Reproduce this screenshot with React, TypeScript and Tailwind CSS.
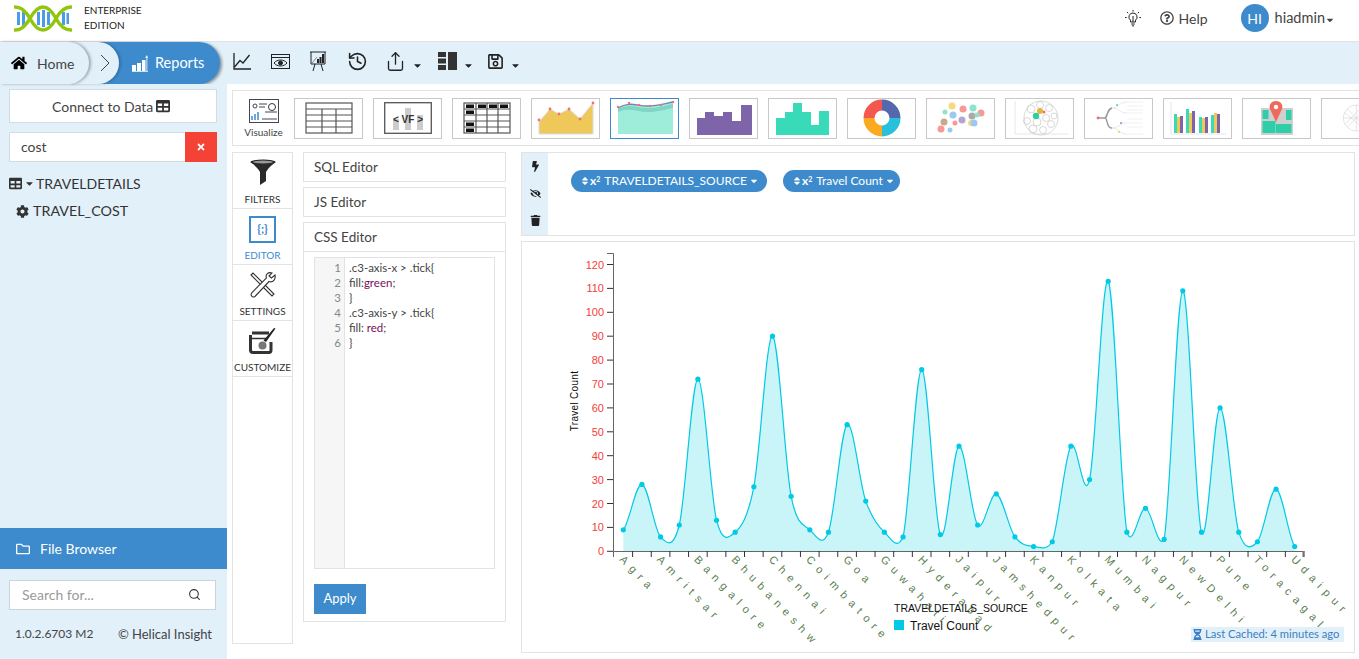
import {
  FaBolt,
  FaCaretDown,
  FaCog,
  FaEyeSlash,
  FaHome,
  FaHourglassHalf,
  FaRegFolder,
  FaRegQuestionCircle,
  FaRegSave,
  FaSort,
  FaTable,
  FaTimes,
  FaTrash,
} from "react-icons/fa";
import { History, Search, Share } from "lucide-react";

const FONT = "font-['Lato','Liberation_Sans',sans-serif]";

const values = [
  9, 28, 6, 11, 72, 13, 8, 27, 90, 23, 9, 8, 53, 21, 8, 6, 76, 7, 44, 11, 24, 6, 2, 4, 44, 30, 113, 8, 18, 5, 109, 8, 60,
  8, 4, 26, 2,
];
const labels = [
  "Agra",
  "Amritsar",
  "Bangalore",
  "Bhubaneshw",
  "Chennai",
  "Coimbatore",
  "Goa",
  "Guwahati",
  "Hyderabad",
  "Jaipur",
  "Jamshedpur",
  "Kanpur",
  "Kolkata",
  "Mumbai",
  "Nagpur",
  "NewDelhi",
  "Pune",
  "Toracagal",
  "Udaipur",
];

const px = (i: number) => 623.3 + i * 18.65;
const py = (v: number) => 551.3 - v * 2.39;

function curvePath() {
  const k = 1 / 6.3;
  let d = `M${px(0)},${py(values[0])}`;
  for (let i = 0; i < values.length - 1; i++) {
    const prev = values[Math.max(i - 1, 0)];
    const cur = values[i];
    const next = values[i + 1];
    const after = values[Math.min(i + 2, values.length - 1)];
    const c1 = Math.min(py(cur + (next - prev) * k), 551.3);
    const c2 = Math.min(py(next - (after - cur) * k), 551.3);
    d += ` C${px(i) + 6.2},${c1} ${px(i + 1) - 6.2},${c2} ${px(i + 1)},${py(next)}`;
  }
  return d;
}

function Chart() {
  const line = curvePath();
  const area = `${line} L${px(36)},551.3 L${px(0)},551.3 Z`;
  const yTicks = Array.from({ length: 13 }, (_, i) => i * 10);
  const xTicks = Array.from({ length: 37 }, (_, i) => 632.6 + i * 18.65);
  return (
    <svg viewBox="522 242 832 410" className="w-[832px] h-[410px]" fontFamily="Liberation Sans, sans-serif">
      <path d={area} fill="#c9f5f9" />
      <path d={line} fill="none" stroke="#00cae6" strokeWidth="1.2" />
      {values.map((v, i) => (
        <circle key={i} cx={px(i)} cy={py(v)} r="2.6" fill="#00cae6" />
      ))}
      <path d="M607,253.5 H613.5 V551.5 H1303 V557" fill="none" stroke="#666" />
      <path d="M613.5,551.5 V557" stroke="#666" />
      {yTicks.map((t) => (
        <g key={t}>
          <line x1="607" x2="613" y1={py(t)} y2={py(t)} stroke="#333" />
          <text x="604" y={py(t) + 4} textAnchor="end" fontSize="11" fill="#f5403a">
            {t}
          </text>
        </g>
      ))}
      {xTicks.map((x) => (
        <line key={x} x1={x} x2={x} y1="551" y2="557" stroke="#333" />
      ))}
      {labels.map((l, i) => {
        const x = 619 + i * 37.3;
        return (
          <text
            key={l}
            transform={`rotate(46 ${x} 560)`}
            x={x}
            y="560"
            fontSize="11"
            letterSpacing="5.8"
            fill="#5b8050"
          >
            {l}
          </text>
        );
      })}
      <text transform="rotate(-90 578 401)" x="578" y="401" textAnchor="middle" fontSize="10" letterSpacing="0.3" fill="#111">
        Travel Count
      </text>
      <text x="894" y="612" fontSize="10.5" fill="#111">
        TRAVELDETAILS_SOURCE
      </text>
      <rect x="894" y="620" width="10" height="10" fill="#00cae6" />
      <text x="910" y="630" fontSize="12" fill="#111">
        Travel Count
      </text>
    </svg>
  );
}

function Logo() {
  return (
    <svg width="58" height="27" viewBox="0 0 58 27" className="shrink-0">
      <g fill="#4a9be8">
        <rect x="3" y="7" width="3" height="13" />
        <rect x="8" y="6" width="3" height="15" />
        <rect x="23" y="7" width="3" height="13" />
        <rect x="28" y="5" width="3" height="17" />
        <rect x="33" y="7" width="3" height="13" />
        <rect x="48" y="7" width="3" height="13" />
        <rect x="52.5" y="8" width="2.5" height="11" />
      </g>
      <path
        d="M1,2 C6,2 10,4 16,13.5 C20,21 24,25 29,25 C34,25 38,21 42,13.5 C46,6 50,2 57,2 M1,25 C6,25 10,23 16,13.5 C20,6 24,2 29,2 C34,2 38,6 42,13.5 C46,21 50,25 57,25"
        fill="none"
        stroke="#92c60e"
        strokeWidth="3.4"
        strokeLinecap="round"
      />
    </svg>
  );
}

function Bulb() {
  return (
    <svg width="18" height="18" viewBox="0 0 18 18" fill="none" stroke="#222" strokeWidth="1">
      <path d="M9,4 a4,4 0 0 1 2.5,7.2 V13 H6.5 V11.2 A4,4 0 0 1 9,4 Z" />
      <path d="M7.2,15 H10.8 M8,16.8 H10 M9,1 V2.6 M3,3 L4.2,4.2 M15,3 L13.8,4.2 M1,8.5 H2.6 M15.4,8.5 H17 M9,7 V13" />
    </svg>
  );
}

function ToolbarIcons() {
  return (
    <div className="flex items-center h-full ml-[13px] pb-[4px] text-[#222]">
      <svg width="18" height="17" viewBox="0 0 18 17" fill="none" stroke="#222" strokeWidth="1.3">
        <path d="M1,0 V16 H18 M1.5,14 L7,7.5 L10,10 L16.5,2" />
      </svg>
      <svg width="19" height="15" viewBox="0 0 19 15" fill="none" stroke="#222" className="ml-[20px]">
        <rect x="0.5" y="0.5" width="18" height="14" />
        <path d="M0.5,3.5 H18.5" />
        <path d="M3,9 C6,5 13,5 16,9 C13,13 6,13 3,9 Z" />
        <circle cx="9.5" cy="9" r="2" fill="#222" />
      </svg>
      <svg width="16" height="20" viewBox="0 0 16 20" fill="none" stroke="#222" className="ml-[20px]">
        <path d="M0,1 H16 M1,1 V13 H15 V1 M5,13 L3,20 M11,13 L13,20" />
        <path d="M2,12 L7,6" stroke="#888" />
        <path d="M8,12 V8 M10.5,12 V6 M13,12 V3" strokeWidth="2" />
      </svg>
      <History size={21} strokeWidth={1.8} className="ml-[21px]" />
      <Share size={21} strokeWidth={1.5} className="ml-[17px]" />
      <FaCaretDown size={11} className="ml-[6px] mt-[8px]" />
      <svg width="19" height="18" viewBox="0 0 19 18" className="ml-[15px]" fill="#333">
        <rect x="0" y="0" width="8" height="5" />
        <rect x="0" y="6.5" width="8" height="5" />
        <rect x="0" y="13" width="8" height="5" />
        <rect x="10" y="0" width="9" height="18" />
      </svg>
      <FaCaretDown size={11} className="ml-[6px] mt-[8px]" />
      <FaRegSave size={17} className="ml-[13px]" />
      <FaCaretDown size={11} className="ml-[6px] mt-[8px]" />
    </div>
  );
}

function Thumb({ children, active }: { children: React.ReactNode; active?: boolean }) {
  return (
    <div
      className={`w-[69px] h-[41px] shrink-0 flex items-center justify-center bg-white border ${
        active ? "border-[#3d8bcd]" : "border-[#c8c8c8]"
      }`}
    >
      {children}
    </div>
  );
}

const barGroups = [
  [6, 14, 17, 16],
  [18, 9, 13, 11],
  [31, 17, 18, 17],
  [43, 15, 13, 14],
];

const thumbs: { active?: boolean; node: React.ReactNode }[] = [
  {
    node: (
      <svg width="48" height="32" viewBox="0 0 48 32" fill="none" stroke="#555" strokeWidth="1.2">
        <rect x="1" y="1" width="46" height="30" />
        <path d="M1,7 H47 M1,13 H47 M1,19 H47 M1,25 H47 M17,7 V31 M31,7 V31" />
      </svg>
    ),
  },
  {
    node: (
      <svg width="48" height="32" viewBox="0 0 48 32" fill="none">
        <rect x="0.7" y="0.7" width="46.6" height="30.6" stroke="#555" strokeWidth="1.3" />
        <rect x="9" y="17" width="6" height="11" fill="#ccc" />
        <rect x="21" y="6" width="6" height="22" fill="#ccc" />
        <rect x="33" y="13" width="6" height="15" fill="#ccc" />
        <text
          x="24"
          y="21"
          textAnchor="middle"
          fontSize="10"
          fontWeight="700"
          fontFamily="Liberation Sans, sans-serif"
          fill="#333"
        >
          {"< VF >"}
        </text>
      </svg>
    ),
  },
  {
    node: (
      <svg width="48" height="32" viewBox="0 0 48 32" fill="none" stroke="#555" strokeWidth="1.2">
        <rect x="1" y="1" width="46" height="30" />
        <path d="M1,7 H47 M1,13 H47 M1,19 H47 M1,25 H47 M13,1 V31 M24,1 V31 M35,1 V31" />
        <g fill="#111" stroke="none">
          <rect x="3" y="2.5" width="8" height="3.5" />
          <rect x="15" y="2.5" width="8" height="3.5" />
          <rect x="26" y="2.5" width="8" height="3.5" />
          <rect x="37" y="2.5" width="8" height="3.5" />
          <rect x="3" y="8.5" width="8" height="3.5" />
          <rect x="3" y="20.5" width="8" height="3.5" />
          <rect x="3" y="26.5" width="8" height="3.5" />
        </g>
      </svg>
    ),
  },
  {
    node: (
      <svg width="60" height="36" viewBox="0 0 60 36">
        <path d="M3,22 L14,9 L23,14 L33,9 L44,19 L57,3 V34 H3 Z" fill="#eec95a" stroke="#ddd" />
        {[
          [3, 20],
          [14, 9],
          [23, 14],
          [33, 9],
          [44, 19],
          [57, 3],
        ].map(([x, y]) => (
          <circle key={x} cx={x} cy={y} r="1.4" fill="#f0736a" />
        ))}
      </svg>
    ),
  },
  {
    active: true,
    node: (
      <svg width="60" height="36" viewBox="0 0 60 36">
        <path d="M3,8 C14,1 22,6 32,6 C42,6 48,4 58,2 V34 H3 Z" fill="#9dedda" />
        <path d="M3,9 C14,3 22,8 32,8 C42,8 48,6 58,4 V8 C48,10 42,12 32,12 C22,12 14,7 3,12 Z" fill="#7fd6c4" />
        <path d="M3,8 C14,1 22,6 32,6 C42,6 48,4 58,2" fill="none" stroke="#7b7fb5" strokeWidth="1.4" />
        {[
          [3, 7],
          [14, 3],
          [24, 5],
          [35, 6],
          [46, 5],
          [58, 2],
        ].map(([x, y]) => (
          <circle key={x} cx={x} cy={y} r="1.2" fill="#f0736a" />
        ))}
      </svg>
    ),
  },
  {
    node: (
      <svg width="60" height="36" viewBox="0 0 60 36">
        <path d="M3,35 V18 H11 V12 H20 V16 H29 V12 H38 V21 H47 V5 H58 V35 Z" fill="#7e65a9" />
      </svg>
    ),
  },
  {
    node: (
      <svg width="60" height="36" viewBox="0 0 60 36">
        <path d="M3,35 V18 H12 V12 H20 V3 H29 V12 H38 V25 H46 V11 H56 V35 Z" fill="#38dab8" />
      </svg>
    ),
  },
  {
    node: (
      <svg width="38" height="38" viewBox="0 0 38 38" fill="none" strokeWidth="11">
        <path d="M19,6 A13,13 0 0 1 32,19" stroke="#5668ad" />
        <path d="M32,19 A13,13 0 0 1 19,32" stroke="#29c0dc" />
        <path d="M19,32 A13,13 0 0 1 6,19" stroke="#fbaa1f" />
        <path d="M6,19 A13,13 0 0 1 19,6" stroke="#f4574f" />
      </svg>
    ),
  },
  {
    node: (
      <svg width="50" height="36" viewBox="0 0 50 36">
        {(
          [
            [16, 6, 3.5, "#f9d77e"],
            [27, 9, 3.5, "#f79a95"],
            [37, 8, 3.5, "#8de3d0"],
            [9, 12, 2.5, "#8de3d0"],
            [17, 15, 3.5, "#9bc9ef"],
            [45, 13, 3.5, "#f79a95"],
            [26, 20, 3.5, "#b2a6d8"],
            [36, 16, 3.5, "#aaa"],
            [41, 15, 2.5, "#8de3d0"],
            [8, 22, 3.5, "#c9a98c"],
            [19, 23, 2.5, "#f79a95"],
            [35, 23, 3, "#f9d77e"],
            [38, 23, 3.5, "#9bc9ef"],
            [5, 29, 3.5, "#f79a95"],
            [14, 30, 2.5, "#9bc9ef"],
          ] as [number, number, number, string][]
        ).map(([x, y, r, c]) => (
          <circle key={`${x}-${y}`} cx={x} cy={y} r={r} fill={c} />
        ))}
      </svg>
    ),
  },
  {
    node: (
      <svg width="60" height="38" viewBox="0 0 60 38" fill="none" stroke="#c8c8c8" strokeWidth="0.7">
        <path d="M5,2 V35 H58" stroke="#ddd" />
        <circle cx="31" cy="19" r="17" />
        {(
          [
            [21, 10, 4],
            [30, 6, 3.5],
            [39, 9, 3.5],
            [44, 17, 3],
            [41, 25, 3.5],
            [33, 31, 3.5],
            [23, 30, 4],
            [17, 22, 3.5],
            [27, 23, 4],
            [36, 19, 3.5],
          ] as number[][]
        ).map(([x, y, r]) => (
          <circle key={`${x}-${y}`} cx={x} cy={y} r={r} />
        ))}
        <circle cx="30" cy="12" r="3" fill="#e3b63c" stroke="none" />
        <circle cx="26" cy="17" r="3.2" fill="#2fce9f" stroke="none" />
        <circle cx="34" cy="13" r="1.5" fill="#f0736a" stroke="none" />
      </svg>
    ),
  },
  {
    node: (
      <svg width="60" height="38" viewBox="0 0 60 38" fill="none" stroke="#dbe6e6" strokeWidth="0.8">
        <path d="M10,19 H16 C19,19 17,10 23,9 C19,10 17,19 16,19 C19,19 17,30 23,29" stroke="#999" strokeWidth="1.4" />
        <path d="M23,9 C30,9 30,3 38,3 M23,9 C30,9 30,14 38,14 M23,29 C30,29 30,24 38,24 M23,29 C30,29 30,35 38,35" />
        <path d="M38,3 H54 M38,7 H54 M38,11 H54 M38,14 H54 M38,20 H54 M38,24 H54 M38,28 H54 M38,35 H54" stroke="#eee" />
        <circle cx="9" cy="19" r="1.4" fill="#f0736a" stroke="none" />
        <circle cx="28" cy="6" r="1" fill="#40d8b8" stroke="none" />
        <circle cx="32" cy="24" r="1" fill="#8a8fd0" stroke="none" />
        <circle cx="30" cy="33" r="1" fill="#eec95a" stroke="none" />
      </svg>
    ),
  },
  {
    node: (
      <svg width="60" height="36" viewBox="0 0 60 36">
        <path d="M3,2 V34 H58" fill="none" stroke="#e6e6e6" />
        {barGroups.map(([x, a, b, c]) => (
          <g key={x}>
            <rect x={x} y={a} width="3" height={33 - a} fill="#38dab8" />
            <rect x={x + 3} y={b} width="3" height={33 - b} fill="#eec95a" />
            <rect x={x + 6} y={c} width="3" height={33 - c} fill="#7e65a9" />
          </g>
        ))}
      </svg>
    ),
  },
  {
    node: (
      <svg width="34" height="36" viewBox="0 0 34 36">
        <rect x="1" y="8" width="32" height="27" fill="#cfcfcf" />
        <rect x="2.5" y="10" width="6" height="9" fill="#2ecfa8" />
        <rect x="2.5" y="21" width="13" height="12" fill="#2ecfa8" />
        <rect x="26" y="10" width="5.5" height="10" fill="#2ecfa8" />
        <rect x="16" y="24" width="15.5" height="9" fill="#2ecfa8" />
        <path d="M16,1 C10,1 8,7 11,11 L16,22 L21,11 C24,7 22,1 16,1 Z" fill="#ef6a5a" />
        <circle cx="16" cy="7" r="2.2" fill="#fff" />
      </svg>
    ),
  },
  {
    node: (
      <svg width="60" height="36" viewBox="0 0 60 36" fill="none" stroke="#ccc" strokeWidth="0.6" className="ml-[18px]">
        <circle cx="20" cy="18" r="16" />
        <path d="M4,18 H36 M20,2 V34 M9,7 L31,29 M31,7 L9,29 M5,11 L28,30 M6,26 L27,4" />
      </svg>
    ),
  },
];

function Funnel() {
  return (
    <svg width="26" height="28" viewBox="0 0 26 28">
      <ellipse cx="13" cy="3" rx="12.5" ry="2.6" fill="#222" />
      <path d="M0.5,3 C4,6 7,8 10,13 V26 L16,22 V13 C19,8 22,6 25.5,3 Z" fill="#2a2a2a" />
      <ellipse cx="13" cy="3" rx="10" ry="1.4" fill="#999" />
    </svg>
  );
}

function Tools() {
  return (
    <svg width="28" height="28" viewBox="0 0 28 28" fill="none" stroke="#333" strokeWidth="1.1">
      <path d="M2,4 L4,2 L15,13 L13,15 Z M15,13 L25,23 L23,25 L13,15" />
      <path d="M26,4 L22.5,7 L20,5 L23,2 C19,0.5 16,4 17.5,7 L3,21.5 C1,24 3,27 6,25.5 L20,10.5 C24,12 27,8 26,4 Z" fill="#fff" />
    </svg>
  );
}

function Customize() {
  return (
    <svg width="28" height="26" viewBox="0 0 28 26">
      <path d="M3,5 H20 M1.5,7 V22 C1.5,23.5 2.5,24.5 4,24.5 H20 C21.5,24.5 22,23.5 22,22 V14" fill="none" stroke="#333" strokeWidth="3" />
      <path d="M1.5,10.5 H18" stroke="#333" strokeWidth="1.5" />
      <path d="M26.5,0.5 L17,14 L14.5,12.5 L25,0 Z" fill="#222" />
      <circle cx="13.5" cy="17.5" r="4" fill="#777" />
    </svg>
  );
}

function TabItem({ icon, label, active }: { icon: React.ReactNode; label: string; active?: boolean }) {
  return (
    <div className="h-[56px] border-b border-[#e3e3e3] flex flex-col items-center shrink-0">
      <div className="h-[40px] flex items-center justify-center">{icon}</div>
      <div className={`text-[10px] leading-[12px] whitespace-nowrap ${active ? "text-[#3d8bcd]" : "text-[#333]"}`}>{label}</div>
    </div>
  );
}

function Pill({ label, className }: { label: string; className: string }) {
  return (
    <div className={`h-[22px] rounded-full bg-[#3d8bcd] text-white flex items-center pl-[9px] text-[12px] ${className}`}>
      <FaSort size={10} />
      <span className="font-bold text-[12px] leading-none">
        x<sup className="text-[7px]">2</sup>
      </span>
      <span className="ml-[4px] whitespace-nowrap">{label}</span>
      <FaCaretDown size={10} className="ml-[2px]" />
    </div>
  );
}

const code = [
  <>.c3-axis-x &gt; .tick{"{"}</>,
  <>
    fill:<span className="text-[#7a0e5b]">green</span>;
  </>,
  <>{"}"}</>,
  <>.c3-axis-y &gt; .tick{"{"}</>,
  <>
    fill: <span className="text-[#7a0e5b]">red</span>;
  </>,
  <>{"}"}</>,
];

export default function App() {
  return (
    <div className={`w-[1359px] h-[659px] overflow-hidden bg-white flex flex-col text-[#444] ${FONT}`}>
      {/* Header */}
      <header className="h-[42px] shrink-0 border-b border-[#e2e2e2] flex items-center pl-[14px] pr-[24px] pb-[5px]">
        <Logo />
        <div className="ml-[12px] text-[10px] leading-[15px] text-[#222]">
          <div>ENTERPRISE</div>
          <div>EDITION</div>
        </div>
        <div className="ml-auto flex items-center">
          <Bulb />
          <FaRegQuestionCircle size={14} className="ml-[18px]" />
          <span className="ml-[5px] text-[14px]">Help</span>
          <div className="ml-[33px] w-[28px] h-[28px] rounded-full bg-[#3d8bcd] text-white text-[14px] flex items-center justify-center">
            HI
          </div>
          <span className="ml-[6px] text-[14.5px]">hiadmin</span>
          <FaCaretDown size={10} className="mt-[3px]" />
        </div>
      </header>

      {/* Toolbar */}
      <div className="h-[42px] shrink-0 bg-[#e1f0f9] flex items-center">
        <div className="flex h-full">
          <div className="relative z-20 w-[89px] rounded-r-[21px] bg-[#e1f0f9] shadow-[2px_0_3px_rgba(0,0,0,0.3)] flex items-center pl-[11px]">
            <FaHome size={16} className="text-black" />
            <span className="ml-[10px] text-[14px]">Home</span>
          </div>
          <div className="relative z-10 w-[50px] ml-[-20px] pl-[31px] rounded-r-[21px] bg-[#e1f0f9] shadow-[2px_0_3px_rgba(0,0,0,0.2)] flex items-center">
            <svg width="10" height="20" viewBox="0 0 10 20" fill="none" stroke="#444">
              <path d="M1,2 L9,10 L1,18" />
            </svg>
          </div>
          <div className="w-[121px] ml-[-20px] pl-[33px] rounded-r-[21px] bg-[#3d8bcd] shadow-[2px_1px_3px_rgba(0,0,0,0.4)] text-white flex items-center">
            <svg width="16" height="17" viewBox="0 0 16 17" fill="#fff">
              <rect x="0" y="10" width="4" height="6" />
              <rect x="5" y="8" width="4" height="8" />
              <rect x="10" y="5" width="3.5" height="11" />
              <path d="M0,16.3 H16 V17 H0 Z M14.5,16 V2 H15.3 V16 Z M13.2,3 L14.9,0 L16,3 Z" />
            </svg>
            <span className="ml-[7px] text-[14.5px]">Reports</span>
          </div>
        </div>
        <ToolbarIcons />
      </div>

      {/* Body */}
      <div className="flex-1 flex min-h-0">
        <aside className="w-[227px] shrink-0 bg-[#e1f0f9] flex flex-col">
          <div className="mt-[5px] ml-[9px] w-[208px] h-[34px] bg-white border border-[#d5dce0] flex items-center pl-[42px] text-[14px]">
            Connect to Data
            <FaTable size={14} className="ml-[3px] text-[#333]" />
          </div>
          <div className="mt-[9px] ml-[9px] w-[208px] h-[30px] bg-white border border-[#d5dce0] flex items-center pl-[11px] pb-[2px] relative text-[14px]">
            cost
            <div className="absolute right-[-1px] top-[-1px] w-[32px] h-[30px] bg-[#f44336] flex items-center justify-center text-white">
              <FaTimes size={10} />
            </div>
          </div>
          <div className="mt-[12px] ml-[9px] flex items-center text-[14px] h-[18px] text-[#333]">
            <FaTable size={13} />
            <FaCaretDown size={11} className="ml-[2px]" />
            <span className="ml-[1px]">TRAVELDETAILS</span>
          </div>
          <div className="mt-[10px] ml-[16px] flex items-center text-[14.3px] h-[18px] text-[#333]">
            <FaCog size={13} />
            <span className="ml-[4px]">TRAVEL_COST</span>
          </div>
          <div className="mt-auto h-[41px] bg-[#3d8bcd] text-white flex items-center pl-[16px] text-[14px]">
            <FaRegFolder size={14} />
            <span className="ml-[10px]">File Browser</span>
          </div>
          <div className="mt-[11px] ml-[9px] w-[207px] h-[30px] bg-white border border-[#cdd3d6] flex items-center pl-[12px] pr-[14px] pb-[2px] text-[14px] text-[#9a9a9a]">
            Search for...
            <Search size={13} className="ml-auto text-[#333]" />
          </div>
          <div className="mt-[17px] mx-[15px] mb-[18px] flex justify-between items-center text-[12px] leading-[14px] text-[#444]">
            <span>1.0.2.6703 M2</span>
            <span className="text-[13px]">© Helical Insight</span>
          </div>
        </aside>

        <main className="flex-1 min-w-0 pl-[5px]">
          {/* Visualization types */}
          <div className="mt-[6px] h-[56px] border border-[#e3e3e3] border-r-0 flex items-center overflow-hidden">
            <div className="w-[61px] shrink-0 flex flex-col items-center">
              <svg width="30" height="24" viewBox="0 0 30 24" fill="none" stroke="#445">
                <rect x="0.5" y="0.5" width="29" height="23" />
                <circle cx="6" cy="7" r="2" />
                <path d="M10,5 H18 M10,8 H16 M16,13 H28 M13,20 H28" />
                <circle cx="23" cy="8" r="3.5" stroke="#333" />
                <path d="M3,21 V17 M6,21 V15 M9,21 V13" stroke="#3d8bcd" strokeWidth="1.5" />
              </svg>
              <span className="text-[10px] leading-[12px] mt-[3px]">Visualize</span>
            </div>
            <div className="flex gap-[10px]">
              {thumbs.map((t, i) => (
                <Thumb key={i} active={t.active}>
                  {t.node}
                </Thumb>
              ))}
            </div>
          </div>

          <div className="mt-[6px] flex items-start">
            {/* Left tabs */}
            <div className="w-[61px] h-[492px] shrink-0 border border-[#e3e3e3] flex flex-col">
              <TabItem icon={<Funnel />} label="FILTERS" />
              <TabItem
                active
                label="EDITOR"
                icon={
                  <div className="w-[27px] h-[27px] border-[2px] border-[#3d8bcd] flex items-center justify-center text-[#3d8bcd] text-[12px] font-bold">
                    {"{;}"}
                  </div>
                }
              />
              <TabItem icon={<Tools />} label="SETTINGS" />
              <TabItem icon={<Customize />} label="CUSTOMIZE" />
            </div>

            {/* Editors */}
            <div className="ml-[10px] w-[203px] shrink-0 flex flex-col gap-[5px] text-[13.5px]">
              <div className="h-[30px] border border-[#e3e3e3] flex items-center pl-[10px]">SQL Editor</div>
              <div className="h-[30px] border border-[#e3e3e3] flex items-center pl-[10px]">JS Editor</div>
              <div className="h-[400px] border border-[#e3e3e3] flex flex-col">
                <div className="h-[29px] shrink-0 border-b border-[#e3e3e3] flex items-center pl-[10px]">CSS Editor</div>
                <div className="mt-[5px] mx-[10px] h-[312px] border border-[#e3e3e3] flex text-[11.5px] leading-[15px]">
                  <div className="w-[30px] shrink-0 bg-[#f6f6f6] border-r border-[#e3e3e3] pt-[2px] pr-[3px] text-right text-[#888]">
                    {code.map((_, i) => (
                      <div key={i}>{i + 1}</div>
                    ))}
                  </div>
                  <div className="pt-[2px] pl-[4px] text-[#444]">
                    {code.map((c, i) => (
                      <div key={i}>{c}</div>
                    ))}
                  </div>
                </div>
                <div className="mt-[15px] ml-[10px] w-[52px] h-[30px] bg-[#3d8bcd] text-white text-[13px] flex items-center justify-center">
                  Apply
                </div>
              </div>
            </div>

            {/* Shelf and chart */}
            <div className="ml-[15px] w-[834px] shrink-0 flex flex-col gap-[5px]">
              <div className="h-[84px] border border-[#e3e3e3] flex">
                <div className="w-[26px] shrink-0 bg-[#e1f0f9] flex flex-col items-center pt-[8px] gap-[16px] text-[#222]">
                  <FaBolt size={11} />
                  <FaEyeSlash size={11} />
                  <FaTrash size={11} />
                </div>
                <div className="flex pl-[23px] pt-[17px] gap-[16px] items-start">
                  <Pill label="TRAVELDETAILS_SOURCE" className="w-[196px]" />
                  <Pill label="Travel Count" className="w-[117px]" />
                </div>
              </div>
              <div className="relative h-[412px] border border-[#e3e3e3]">
                <Chart />
                <div className="absolute left-[669px] top-[385px] w-[153px] h-[15px] bg-[#e1f0f9] text-[#3d7fc4] text-[11.2px] flex items-center pl-[1px] whitespace-nowrap">
                  <FaHourglassHalf size={11} />
                  <span className="ml-[2px]">Last Cached: 4 minutes ago</span>
                </div>
              </div>
            </div>
          </div>
        </main>
      </div>
    </div>
  );
}
